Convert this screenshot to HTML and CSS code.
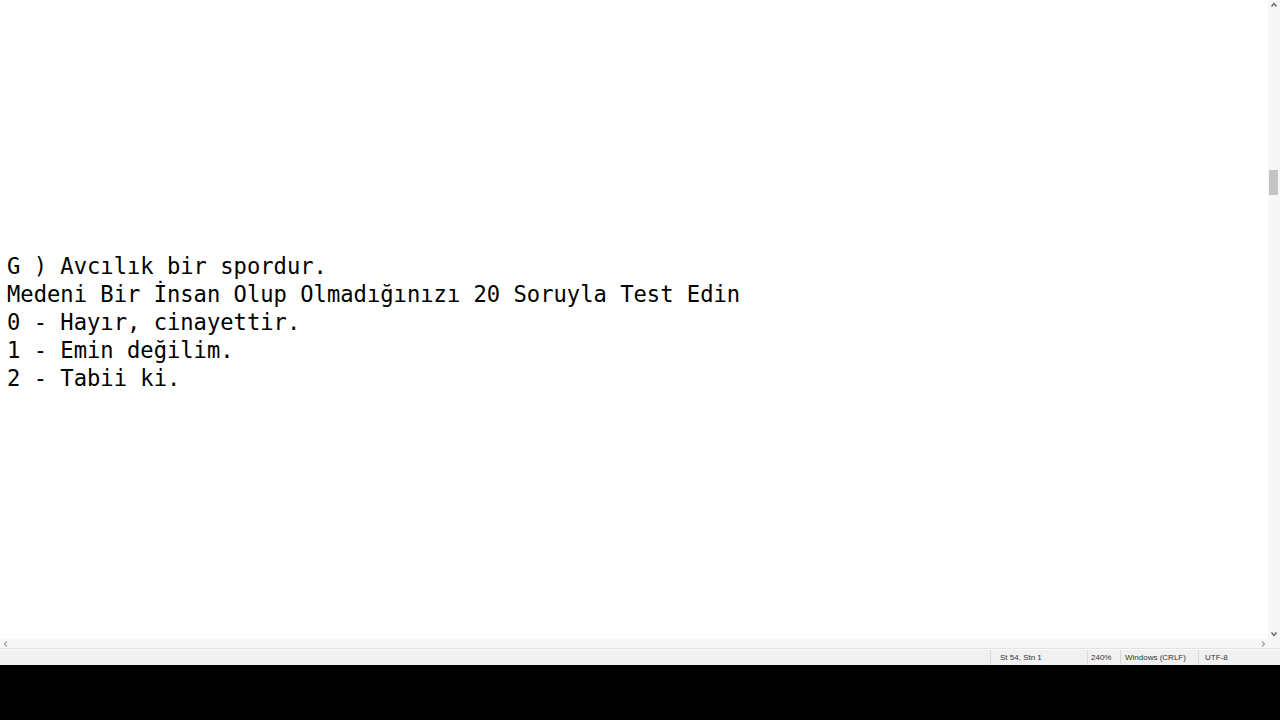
FILE: index.html
```html
<!DOCTYPE html>
<html lang="tr">
<head>
    <meta charset="UTF-8">
    <meta name="viewport" content="width=device-width, initial-scale=1.0">
    <title>Not Defteri</title>
    <link rel="stylesheet" href="styles.css">
</head>
<body>
    <div class="window">
        <div class="main">
            <pre class="editor">









G ) Avcılık bir spordur.
Medeni Bir İnsan Olup Olmadığınızı 20 Soruyla Test Edin
0 - Hayır, cinayettir.
1 - Emin değilim.
2 - Tabii ki.</pre>
            <div class="vscroll">
                <svg class="arrow" width="12" height="10" viewBox="0 0 12 10">
                    <path d="M3.5 6.5 L6 3.5 L8.5 6.5" fill="none" stroke="#606060" stroke-width="1.3"/>
                </svg>
                <div class="track">
                    <div class="thumb"></div>
                </div>
                <svg class="arrow" width="12" height="10" viewBox="0 0 12 10">
                    <path d="M3.5 3.5 L6 6.5 L8.5 3.5" fill="none" stroke="#606060" stroke-width="1.3"/>
                </svg>
            </div>
        </div>
        <div class="hscroll">
            <svg class="arrow" width="10" height="10" viewBox="0 0 10 10">
                <path d="M6 2.5 L3.5 5 L6 7.5" fill="none" stroke="#a0a0a0" stroke-width="1.2"/>
            </svg>
            <svg class="arrow right" width="10" height="10" viewBox="0 0 10 10">
                <path d="M4 2.5 L6.5 5 L4 7.5" fill="none" stroke="#a0a0a0" stroke-width="1.2"/>
            </svg>
            <div class="corner"></div>
        </div>
        <div class="statusbar">
            <div class="status-fill"></div>
            <div class="status-item pos">St 54, Stn 1</div>
            <div class="status-item zoom">240%</div>
            <div class="status-item eol">Windows (CRLF)</div>
            <div class="status-item enc">UTF-8</div>
        </div>
    </div>
</body>
</html>
```

FILE: styles.css
```css
body {
    margin: 0;
    background-color: #000;
}

.window {
    height: 665px;
    display: flex;
    flex-direction: column;
    background-color: #fff;
}

.main {
    height: 639px;
    display: flex;
}

.editor {
    flex: 1;
    margin: 0;
    padding-left: 7px;
    font-family: "DejaVu Sans Mono", "Liberation Mono", monospace;
    font-size: 22.15px;
    line-height: 28px;
    color: #000;
    overflow: hidden;
}

.vscroll {
    width: 12px;
    display: flex;
    flex-direction: column;
    background-color: #f7f7f7;
}

.vscroll .arrow {
    display: block;
}

.track {
    flex: 1;
    padding-top: 160px;
}

.thumb {
    width: 9px;
    height: 25px;
    margin-left: 1px;
    background-color: #c4c4c4;
}

.hscroll {
    height: 10px;
    display: flex;
    align-items: center;
    padding-left: 1px;
    background-color: #f7f7f7;
    border-bottom: 1px solid #e2e2e2;
    box-sizing: border-box;
}

.hscroll .right {
    margin-left: auto;
}

.hscroll .corner {
    width: 12px;
}

.statusbar {
    height: 16px;
    display: flex;
    background-color: #f0f0f0;
    border-top: 1px solid #fbfbfb;
    box-sizing: border-box;
    font-family: "Liberation Sans", Arial, sans-serif;
    font-size: 8px;
    line-height: 15px;
    color: #333;
}

.status-fill {
    flex: 1;
}

.status-item {
    box-sizing: border-box;
    border-left: 1px solid #dadada;
    white-space: nowrap;
}

.pos {
    width: 97px;
    padding-left: 9px;
}

.zoom {
    width: 33px;
    padding-left: 3px;
}

.eol {
    width: 78px;
    padding-left: 4px;
}

.enc {
    width: 82px;
    padding-left: 6px;
}
```
